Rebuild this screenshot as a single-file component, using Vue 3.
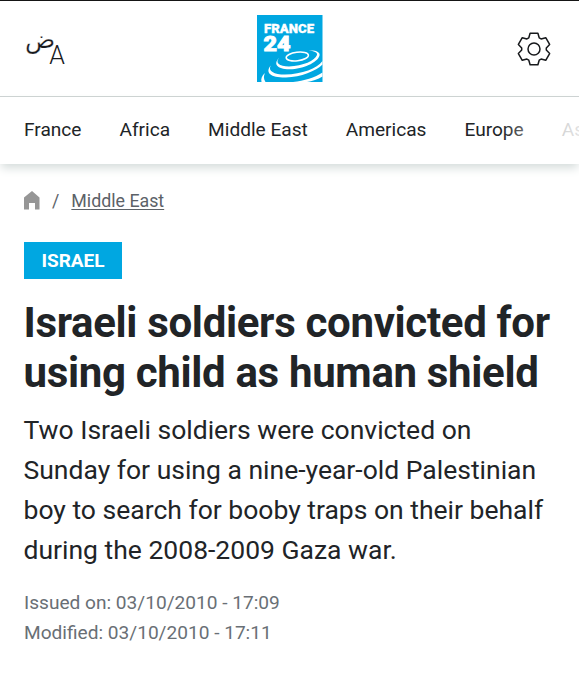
<template>
  <div class="page">
    <header class="top-bar">
      <button class="icon-btn lang-btn" aria-label="Language">
        <span class="lang-ar">ض</span>
        <span class="lang-la">A</span>
      </button>
      <a class="logo" href="#">
        <svg width="66" height="67" viewBox="0 0 66 67">
          <rect width="65.5" height="67" fill="#00a7e1" />
          <text class="logo-name" x="7" y="17.7" textLength="50" lengthAdjust="spacingAndGlyphs">FRANCE</text>
          <text class="logo-num" x="6.5" y="35.8" textLength="27" lengthAdjust="spacingAndGlyphs">24</text>
          <ellipse cx="40.3" cy="41.5" rx="11.2" ry="4.2" fill="none" stroke="#fff" stroke-width="1.5" transform="rotate(-7 40.3 41.5)" />
          <g fill="#fff">
            <path d="M22 43C18 47.500 22 51.500 32 51.500C46 51 58 45.500 60 40C60.600 37.500 57 36 51.500 35.600C59 35 63.500 37 62.500 40.800C60 48 46 54 33 54.300C20 54.500 16 49 22 43Z" />
            <path d="M13.800 50.500C10.500 56 17 59.600 28 59.600C45 59.300 60 53.300 65.500 46V49.500C59 56 44 62 29 62.500C14 62.700 7.500 58 13.800 50.500Z" />
            <path d="M8 58C6.500 61 6.500 64 8.500 67H4.500C3.700 63.500 5 60.500 8 58Z" />
            <path d="M36 67C47 65.800 58 62.500 65.500 57.500V61.500C61 64.300 55 66.200 50 67Z" />
          </g>
        </svg>
      </a>
      <button class="icon-btn" aria-label="Settings">
        <svg width="36" height="36" viewBox="-18 -18 36 36" fill="none" stroke="#17191c" stroke-width="1.5" stroke-linejoin="round">
          <path :d="gearPath" />
          <circle r="6" />
        </svg>
      </button>
    </header>

    <nav class="nav">
      <a v-for="item in sections" :key="item" href="#">{{ item }}</a>
    </nav>

    <main class="article">
      <div class="breadcrumb">
        <svg width="16" height="19" viewBox="0 0 16 19">
          <path d="M8 0L15.500 6.500V18.500H11V12H5V18.500H0V6.500Z" fill="#969696" />
        </svg>
        <span class="slash">/</span>
        <a href="#">Middle East</a>
      </div>
      <span class="tag">ISRAEL</span>
      <h1>Israeli soldiers convicted for<br />using child as human shield</h1>
      <p class="intro">
        Two Israeli soldiers were convicted on<br />
        Sunday for using a nine-year-old Palestinian<br />
        boy to search for booby traps on their behalf<br />
        during the 2008-2009 Gaza war.
      </p>
      <div class="dates">
        <div>Issued on: 03/10/2010 - 17:09</div>
        <div>Modified: 03/10/2010 - 17:11</div>
      </div>
    </main>
  </div>
</template>

<script setup>
const sections = ['France', 'Africa', 'Middle East', 'Americas', 'Europe', 'Asia-Pacific']

// one tooth of the gear, repeated every 60 degrees
const tooth = [[-5.2, -11.2], [-3.9, -15.8], [3.9, -15.8], [5.2, -11.2]]
const points = []
for (let i = 0; i < 6; i++) {
  const a = (i * Math.PI) / 3
  for (const [x, y] of tooth) {
    points.push(
      (x * Math.cos(a) - y * Math.sin(a)).toFixed(2) + ' ' + (x * Math.sin(a) + y * Math.cos(a)).toFixed(2)
    )
  }
}
const gearPath = 'M' + points.join('L') + 'Z'
</script>

<style>
body {
  background: #fff;
  overflow: hidden;
}
</style>

<style scoped>
.page {
  height: 680px;
  box-sizing: border-box;
  border-top: 1px solid #151515;
  background: #fff;
  color: #212427;
  font-family: Roboto, "Noto Sans", sans-serif;
  overflow: hidden;
}
a {
  color: inherit;
  text-decoration: none;
}
.top-bar {
  display: flex;
  align-items: center;
  justify-content: space-between;
  height: 95px;
  padding: 0 27px 0 26px;
  border-bottom: 1px solid #cdd2d2;
}
.icon-btn {
  display: flex;
  padding: 0;
  border: none;
  background: none;
  color: #17191c;
}
.lang-btn {
  width: 38px;
  height: 36px;
}
.lang-ar {
  margin: -6px 0 0 -1px;
  font: 25px/30px "DejaVu Sans", sans-serif;
  -webkit-text-stroke: 0.25px #fff;
}
.lang-la {
  margin: 12px 0 0 -6px;
  font: 300 25px/26px Roboto, sans-serif;
}
.logo {
  height: 67px;
}
.logo-name,
.logo-num {
  font-family: Roboto, sans-serif;
  font-weight: 900;
  fill: #fff;
  stroke: #fff;
  stroke-width: 0.3px;
}
.logo-name {
  font-size: 12.5px;
}
.logo-num {
  font-size: 21px;
  stroke-width: 0.9px;
}
.nav {
  position: relative;
  display: flex;
  gap: 38px;
  height: 67px;
  padding-left: 24px;
  line-height: 66px;
  font-size: 19.1px;
  white-space: nowrap;
  box-shadow: 0 5px 9px -1px #d5dcdb;
}
.nav::after {
  content: "";
  position: absolute;
  top: 0;
  right: 0;
  width: 78px;
  height: 67px;
  background: linear-gradient(90deg, #fff0, #fffc 75%, #fffd);
}
.article {
  padding: 24px 24px 0;
}
.breadcrumb {
  display: flex;
  align-items: center;
  height: 25px;
  color: #5c6268;
  font-size: 17.8px;
}
.slash {
  margin: 0 12px 0 12px;
}
.breadcrumb a {
  text-decoration: underline;
  text-underline-offset: 2px;
}
.tag {
  display: block;
  width: 98px;
  height: 37px;
  margin-top: 29px;
  background: #00a7e1;
  color: #fff;
  font-size: 19px;
  font-weight: 700;
  line-height: 37px;
  text-align: center;
}
h1 {
  margin: 19px 0 0 -0.5px;
  font-size: 42px;
  font-weight: 700;
  line-height: 49.5px;
  letter-spacing: -0.33px;
  white-space: nowrap;
}
.intro {
  margin: 13px 0 0 -0.5px;
  font-size: 26.5px;
  line-height: 40px;
  white-space: nowrap;
}
.dates {
  margin-top: 18px;
  color: #696f75;
  font-size: 19.1px;
  line-height: 29.5px;
}
</style>
